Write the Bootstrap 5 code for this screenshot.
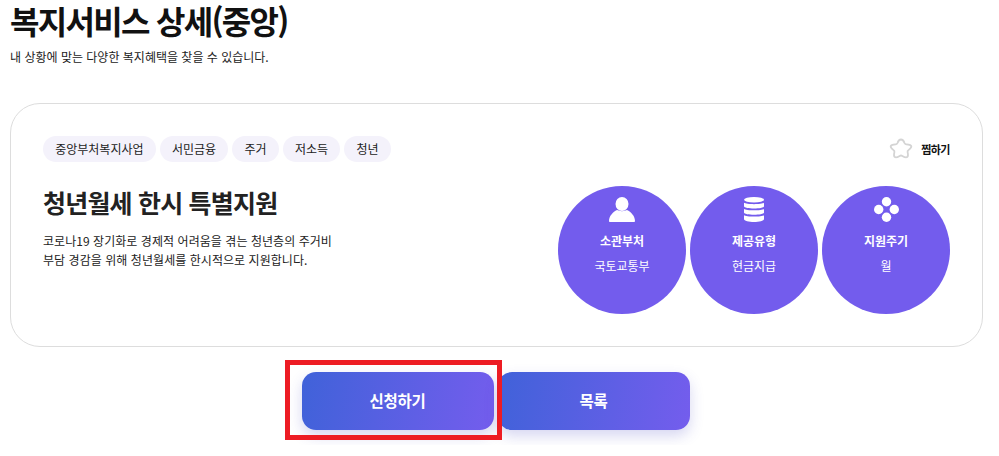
<!DOCTYPE html>
<html lang="ko">

<head>
    <meta charset="UTF-8">
    <title>복지서비스 상세(중앙)</title>
    <link href="https://cdn.jsdelivr.net/npm/bootstrap@5.3.0/dist/css/bootstrap.min.css" rel="stylesheet">
    <style>
        body {
            font-family: "Noto Sans CJK KR", "Noto Sans", sans-serif;
            background-color: #fff;
            color: #222;
            overflow: hidden;
        }

        .page-wrap {
            padding: 0 16px 0 10px;
        }

        .page-title {
            font-size: 32px;
            font-weight: 700;
            line-height: 40px;
            letter-spacing: -1.7px;
            color: #111;
            margin: 0;
        }

        .page-sub {
            font-size: 12px;
            line-height: 18px;
            letter-spacing: 0;
            margin: 8px 0 37px;
        }

        .detail-box {
            height: 244px;
            border: 1px solid #ddd;
            border-radius: 30px;
            padding: 32px 32px 0;
        }

        .tag-chip {
            height: 26px;
            line-height: 26px;
            padding: 0 12.2px;
            font-size: 12px;
            border-radius: 13px;
            background-color: #f4f2fb;
            letter-spacing: 0;
        }

        .zzim {
            font-size: 11px;
            font-weight: 700;
            letter-spacing: -0.5px;
            color: #111;
        }

        .detail-title {
            font-size: 25px;
            font-weight: 700;
            line-height: 36px;
            letter-spacing: -0.8px;
            margin: -2px 0 11px;
        }

        .detail-desc {
            font-size: 12px;
            line-height: 19px;
            letter-spacing: 0.05px;
            margin: 0;
        }

        .info-dot {
            width: 128px;
            height: 128px;
            border-radius: 50%;
            background-color: #735ced;
            color: #fff;
            padding-top: 11px;
            font-size: 12px;
            letter-spacing: 0;
        }

        .info-dot svg {
            display: block;
            height: 25px;
            margin-bottom: 10px;
        }

        .info-dot strong {
            line-height: 18px;
            font-weight: 700;
        }

        .info-dot span {
            line-height: 18px;
            margin-top: 7px;
        }

        .btn-zone {
            position: relative;
            height: 98px;
            padding-top: 25px;
            margin-right: 2px;
            overflow: hidden;
        }

        .btn-apply {
            width: 192px;
            height: 58px;
            border: 0;
            border-radius: 14px;
            color: #fff;
            font-size: 15.5px;
            font-weight: 700;
            letter-spacing: -0.3px;
            background: linear-gradient(100deg, #4062d9, #745ded);
            box-shadow: 0 6px 14px rgba(70, 70, 190, .22);
        }

        .btn-apply:hover {
            color: #fff;
            background: linear-gradient(100deg, #4062d9, #745ded);
        }

        .red-mark {
            position: absolute;
            left: 275px;
            top: 13px;
            width: 217px;
            height: 80px;
            border: 5px solid #ed1c24;
        }
    </style>
</head>

<body>

    <div class="page-wrap">
        <h1 class="page-title">복지서비스 상세(중앙)</h1>
        <p class="page-sub">내 상황에 맞는 다양한 복지혜택을 찾을 수 있습니다.</p>

        <div class="detail-box">
            <div class="d-flex justify-content-between align-items-center">
                <div class="d-flex gap-1">
                    <div class="tag-chip">중앙부처복지사업</div>
                    <div class="tag-chip">서민금융</div>
                    <div class="tag-chip">주거</div>
                    <div class="tag-chip">저소득</div>
                    <div class="tag-chip">청년</div>
                </div>
                <div class="zzim d-flex align-items-center gap-2">
                    <svg width="24" height="24" viewBox="0 0 24 24" fill="#fff" stroke="#d4d4d4" stroke-width="1.8" stroke-linejoin="round">
                        <path d="M12 2.500c1.900 0 2.900 1.700 3.500 3.500.3.800.8 1.200 1.700 1.300 2.100.2 4.700.3 5.100 1.900.4 1.500-1.500 2.800-3 4-.7.500-.9 1.100-.7 1.900.5 2 1 4-.4 5-1.400 1-3.300-.2-4.900-1.200-.8-.5-1.800-.5-2.600 0-1.600 1-3.500 2.200-4.900 1.200-1.400-1-.9-3-.4-5 .2-.8 0-1.400-.7-1.900-1.500-1.200-3.400-2.500-3-4 .4-1.600 3-1.700 5.100-1.900.9-.1 1.400-.5 1.700-1.300.6-1.800 1.600-3.500 3.500-3.500z"/>
                    </svg>
                    찜하기
                </div>
            </div>

            <div class="d-flex justify-content-between mt-4">
                <div>
                    <h2 class="detail-title">청년월세 한시 특별지원</h2>
                    <p class="detail-desc">코로나19 장기화로 경제적 어려움을 겪는 청년층의 주거비<br>부담 경감을 위해 청년월세를 한시적으로 지원합니다.</p>
                </div>
                <div class="d-flex gap-1">
                    <div class="info-dot d-flex flex-column align-items-center">
                        <svg width="26" height="25" viewBox="0 0 26 25" fill="#fff">
                            <ellipse cx="13" cy="7" rx="6.500" ry="7"/>
                            <path d="M0 24c0-5 4-9 8-11 3 1.500 7 1.500 10 0 4 2 8 6 8 11 0 .5-.4 1-1 1H1c-.6 0-1-.5-1-1z"/>
                        </svg>
                        <strong>소관부처</strong>
                        <span>국토교통부</span>
                    </div>
                    <div class="info-dot d-flex flex-column align-items-center">
                        <svg width="20" height="25" viewBox="0 0 20 25" fill="#fff">
                            <ellipse cx="10" cy="2.800" rx="10" ry="2.800"/>
                            <path d="M0 5.800c2 1.800 18 1.800 20 0v3.400c0 3-20 3-20 0z"/>
                            <path d="M0 12c2 1.800 18 1.800 20 0v3.400c0 3-20 3-20 0z"/>
                            <path d="M0 18.200c2 1.800 18 1.800 20 0v3.800c0 4-20 4-20 0z"/>
                        </svg>
                        <strong>제공유형</strong>
                        <span>현금지급</span>
                    </div>
                    <div class="info-dot d-flex flex-column align-items-center">
                        <svg width="25" height="25" viewBox="0 0 25 25" fill="#fff">
                            <circle cx="12.500" cy="4.700" r="4.700"/>
                            <circle cx="4.700" cy="12.500" r="4.700"/>
                            <circle cx="20.300" cy="12.500" r="4.700"/>
                            <circle cx="12.500" cy="20.300" r="4.700"/>
                        </svg>
                        <strong>지원주기</strong>
                        <span>월</span>
                    </div>
                </div>
            </div>
        </div>

        <div class="btn-zone d-flex justify-content-center gap-1">
            <button type="button" class="btn btn-apply">신청하기</button>
            <button type="button" class="btn btn-apply">목록</button>
            <div class="red-mark"></div>
        </div>
    </div>

    <script src="https://cdn.jsdelivr.net/npm/bootstrap@5.3.0/dist/js/bootstrap.bundle.min.js"></script>
</body>

</html>
